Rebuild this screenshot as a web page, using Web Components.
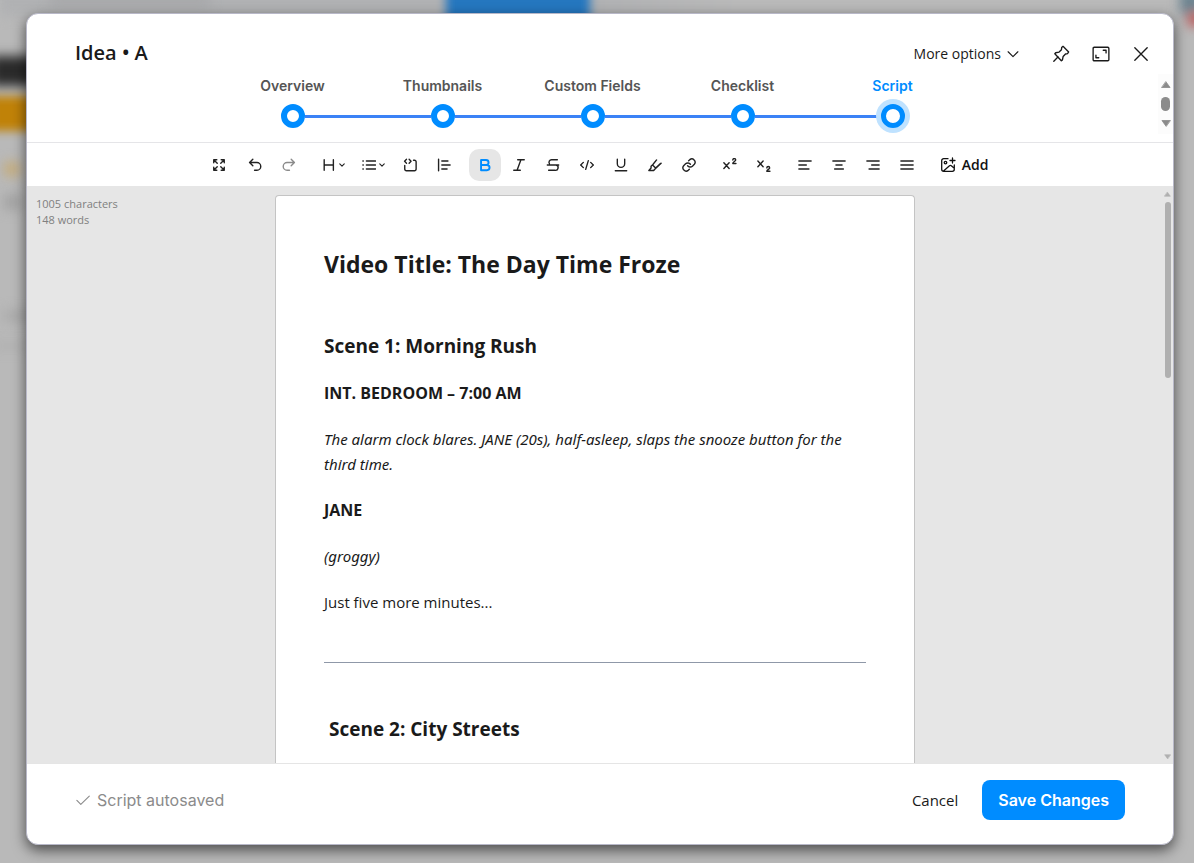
<!DOCTYPE html>
<html lang="en">
<head>
<meta charset="utf-8">
<meta name="viewport" content="width=device-width, initial-scale=1">
<title>Idea • A</title>
<style>
  html, body { height: 100%; margin: 0; }
  body { font-family: "Open Sans", "Noto Sans", sans-serif; color: #1a1a1a; background: #b9b9b9; }
</style>
</head>
<body>
<app-backdrop>
  <idea-dialog>
    <dialog-header slot="header" heading="Idea • A">
      <step-item label="Overview" first></step-item>
      <step-item label="Thumbnails"></step-item>
      <step-item label="Custom Fields"></step-item>
      <step-item label="Checklist"></step-item>
      <step-item label="Script" current last></step-item>
    </dialog-header>
    <editor-toolbar slot="toolbar"></editor-toolbar>
    <script-editor slot="editor" characters="1005" words="148">
      <h1>Video Title: The Day Time Froze</h1>
      <h2>Scene 1: Morning Rush</h2>
      <p class="cue"><strong>INT. BEDROOM – 7:00 AM</strong></p>
      <p class="direction"><em>The alarm clock blares. JANE (20s), half-asleep, slaps the snooze button for the third time.</em></p>
      <p class="cue"><strong>JANE</strong></p>
      <p class="direction"><em>(groggy)</em></p>
      <p>Just five more minutes...</p>
      <hr>
      <h2>&nbsp;Scene 2: City Streets</h2>
    </script-editor>
    <dialog-footer slot="footer">Script autosaved</dialog-footer>
  </idea-dialog>
</app-backdrop>

<script>
const define = (name, html, setup) => customElements.define(name, class extends HTMLElement {
  constructor() {
    super();
    const root = this.attachShadow({ mode: "open" });
    const t = document.createElement("template");
    t.innerHTML = html;
    root.append(t.content.cloneNode(true));
    if (setup) setup(this, root);
  }
});

/* Icon set: 16px grid, stroked with currentColor. */
const ICONS = {
  chevron: '<path d="M1.500 5 8 11.500l6.500-6.500"/>',
  caret: '<path d="M5 6.500 8 9.500l3-3"/>',
  pin: '<path d="M9.800 1.200 14.800 6.200 13.800 7.600 12 8 9.900 10.200 9.300 13.200 8.300 14 2.500 7.800 3.300 6.900 6.300 6.300 8.400 4.200 8.600 2.300Z"/><path d="M5.300 10.700 1.600 14.400"/>',
  window: '<rect x="1" y="2" width="14" height="12" rx="1"/><path d="M10 4.700h2.500V7M3.500 9v2.300H6"/>',
  close: '<path d="M2.500 2.500l11 11M13.500 2.500l-11 11"/>',
  expand: '<path d="M2 5.500V2h3.500M10.500 2H14v3.500M14 10.500V14h-3.500M5.500 14H2v-3.500M2.500 2.500l3.500 3.500M13.500 2.500 10 6M13.500 13.500 10 10M2.500 13.500 6 10"/>',
  undo: '<path d="M5.500 1.500 1.800 5.200l3.700 3.700M2 5.200h8.200a4.400 4.400 0 0 1 0 8.800H7.500"/>',
  redo: '<path d="M10.500 1.500l3.700 3.700-3.700 3.700M14 5.200H5.800a4.400 4.400 0 0 0 0 8.800H8.500"/>',
  heading: '<path d="M2.500 2v12M13 2v12M2.500 8H13"/>',
  list: '<path d="M5 3.500h10.500M5 8h10.500M5 12.500h10.500"/><path d="M1 3.500h.5M1 8h.5M1 12.500h.5"/>',
  codeblock: '<path d="M4 1.500 1.800 3.700l2.200 2.200M7 1.500l2.200 2.200L7 5.900M12 2.500h1.200A1.800 1.800 0 0 1 15 4.300v8.400a1.800 1.800 0 0 1-1.800 1.800H3.800A1.800 1.800 0 0 1 2 12.700V8.500"/>',
  quote: '<path d="M1.800 1.500v13M5.500 3.500h7M5.500 8h9.500M5.500 12.500h6"/>',
  bold: '<path stroke-width="2.200" d="M3.500 2.200h5.700a2.800 2.800 0 0 1 0 5.700H3.500ZM3.500 7.900h6.700a3 3 0 0 1 0 6H3.500Z"/>',
  italic: '<path d="M6.500 2h7.500M2 14h7.500M10.200 2 5.800 14"/>',
  strike: '<path d="M13 2H6.300a2.900 2.900 0 0 0-2.400 4.500M1.500 8h13M11.500 8a3 3 0 0 1-1.500 6H3"/>',
  code: '<path d="M3.800 5 .8 8l3 3M12.200 5l3 3-3 3M9.500 3 6.500 13"/>',
  underline: '<path d="M3.800 1.500v5a4.200 4.200 0 0 0 8.400 0v-5M1.500 14.500h13"/>',
  highlight: '<path d="M6 7 3.500 9.500v2L1 14.200h5.500l1.500-1.700 7-6.500M9.800 2.200 5.800 7.200a1 1 0 0 0 0 1.300l2.300 2.300a1 1 0 0 0 1.300 0l4.800-4.400"/>',
  link: '<path d="M6.400 8.900a3.700 3.700 0 0 0 5.500.4l2.200-2.200a3.700 3.700 0 0 0-5.200-5.200L7.600 3.100M9.600 7.100a3.700 3.700 0 0 0-5.500-.4L1.900 8.900a3.700 3.700 0 0 0 5.200 5.200l1.300-1.200"/>',
  sup: '<path d="M1 5.500 7 12M7 5.500 1 12M11.200 2.300a1.600 1.600 0 0 1 3.300 0c0 1.500-3.300 2-3.300 3.900h3.600"/>',
  sub: '<path d="M1 3.500 7 10M7 3.500 1 10M11.200 11.300a1.600 1.600 0 0 1 3.300 0c0 1.500-3.300 2-3.300 3.900h3.600"/>',
  left: '<path d="M1 3.500h14M1 8h8.500M1 12.500h11.500"/>',
  center: '<path d="M1 3.500h14M4.500 8h7M3 12.500h10"/>',
  right: '<path d="M1 3.500h14M6.500 8H15M3.500 12.500H15"/>',
  justify: '<path d="M1 3.500h14M1 8h14M1 12.500h14"/>',
  image: '<path d="M8 1.700H3.700A2 2 0 0 0 1.700 3.700v8.600a2 2 0 0 0 2 2h8.600a2 2 0 0 0 2-2V8M12.500 1v5M10 3.500h5M3.500 14l6-5.300a1.400 1.400 0 0 1 1.800 0l3 2.600"/><circle cx="5.500" cy="5.600" r="1.300"/>',
  check: '<path d="M1 8.500l4.500 4.500L15.200 3.500"/>',
  up: '<path fill="currentColor" d="M8 3l6.500 9h-13Z"/>',
  down: '<path fill="currentColor" d="M8 13 1.500 4h13Z"/>'
};

define("ui-icon", `
<style>
  :host { display: inline-flex; flex: none; width: var(--icon-size, 16px); height: var(--icon-size, 16px); }
  svg { width: 100%; height: 100%; fill: none; stroke: currentColor; stroke-width: var(--icon-stroke, 1.3); stroke-linecap: round; stroke-linejoin: round; }
</style>
<svg viewBox="0 0 16 16" aria-hidden="true"></svg>`, (el, root) => {
  root.querySelector("svg").innerHTML = ICONS[el.getAttribute("name")] || "";
});

define("app-backdrop", `
<style>
  :host { display: flex; box-sizing: border-box; position: relative; overflow: hidden; height: 100vh; padding: 13px 20px 18px 26px; background: #b9b9b9; }
  .blob { position: absolute; filter: blur(6px); }
  .bar { left: 0; right: 0; top: -12px; height: 28px; background: linear-gradient(90deg, #b0b1b3 50%, #b9b9b9 62%); }
  .search { left: 50px; top: -6px; width: 160px; height: 12px; background: #a6a7a9; }
  .cta { left: 446px; top: -12px; width: 144px; height: 40px; background: #2577bf; filter: blur(5px); }
  .head { left: -10px; top: 56px; width: 60px; height: 30px; background: #2a2a2a; }
  .tag { left: -10px; top: 96px; width: 60px; height: 35px; background: #c08208; filter: blur(5px); }
  .dot { left: 4px; top: 162px; width: 16px; height: 14px; background: #c5ab78; }
  .chip { left: 4px; top: 194px; width: 18px; height: 16px; background: #a2a2a2; }
  .row { left: 4px; top: 310px; width: 40px; height: 12px; background: #a9a9a9; }
  .row2 { left: -10px; top: 342px; height: 8px; background: #b0b0b0; }
  .avatar { right: -8px; top: -10px; width: 22px; height: 24px; background: #6a8390; }
  .avatar2 { right: -10px; top: 12px; width: 16px; height: 14px; background: #c05555; }
  ::slotted(*) { flex: 1; min-width: 0; position: relative; }
</style>
<div class="blob bar"></div><div class="blob search"></div><div class="blob cta"></div>
<div class="blob head"></div><div class="blob tag"></div><div class="blob dot"></div><div class="blob chip"></div>
<div class="blob row"></div><div class="blob row row2"></div>
<div class="blob avatar"></div><div class="blob avatar2"></div>
<slot></slot>`);

define("idea-dialog", `
<style>
  :host { display: flex; flex-direction: column; box-sizing: border-box; overflow: hidden; border: 1px solid #b8b8c8; border-radius: 12px; background: #fff; box-shadow: 0 5px 14px rgba(0,0,0,.6); }
  ::slotted([slot="editor"]) { flex: 1; min-height: 0; }
</style>
<slot name="header"></slot><slot name="toolbar"></slot><slot name="editor"></slot><slot name="footer"></slot>`);

define("dialog-header", `
<style>
  :host { display: block; padding-bottom: 8px; border-bottom: 1px solid #e5e5e8; }
  .top { display: flex; align-items: center; justify-content: space-between; box-sizing: border-box; height: 60px; padding: 20px 23px 0 48px; }
  h1 { margin: 0; font-size: 20px; line-height: 24px; font-weight: 600; padding-bottom: 2px; }
  .actions { display: flex; align-items: center; gap: 22px; }
  button { display: flex; align-items: center; justify-content: center; border: 0; padding: 0; background: none; color: inherit; font: inherit; --icon-stroke: 1.200; --icon-size: 18px; }
  .more { gap: 6px; margin-right: 11px; font-size: 14px; line-height: 20px; --icon-size: 12px; --icon-stroke: 1.500; }
  .lower { display: grid; grid-template-columns: 1fr 15px; height: 60px; }
  nav { display: flex; justify-content: center; padding-top: 2px; }
  .scroll { display: flex; flex-direction: column; align-items: center; justify-content: space-between; padding: 6px 0; background: #fcfcfc; color: #8b8b8b; --icon-size: 10px; }
  .scroll i { width: 9px; height: 14px; border-radius: 5px; background: #8b8b8b; }
</style>
<div class="top">
  <h1></h1>
  <div class="actions">
    <button class="more">More options <ui-icon name="chevron"></ui-icon></button>
    <button aria-label="Pin"><ui-icon name="pin"></ui-icon></button>
    <button aria-label="Full window"><ui-icon name="window"></ui-icon></button>
    <button aria-label="Close"><ui-icon name="close"></ui-icon></button>
  </div>
</div>
<div class="lower">
  <nav aria-label="Sections"><slot></slot></nav>
  <div class="scroll" aria-hidden="true"><ui-icon name="up"></ui-icon><i></i><ui-icon name="down"></ui-icon></div>
</div>`, (el, root) => {
  root.querySelector("h1").textContent = el.getAttribute("heading");
});

define("step-item", `
<style>
  :host { display: block; width: 150px; color: #555; }
  :host([current]) { color: #008cff; }
  a { display: block; color: inherit; text-decoration: none; text-align: center; font: 600 14px/20px Inter, sans-serif; }
  .rail { display: flex; align-items: center; height: 24px; margin-top: 8px; }
  .line { flex: 1; height: 3px; background: #3b82f6; }
  :host([first]) .line:first-child, :host([last]) .line:last-child { background: none; }
  .dot { box-sizing: border-box; width: 24px; height: 24px; border: 6px solid #008cff; border-radius: 50%; background: #fff; }
  :host([current]) .dot { border-width: 5px; box-shadow: 0 0 0 5px #bfe2ff; }
</style>
<a href="#"><span class="label"></span><span class="rail"><span class="line"></span><span class="dot"></span><span class="line"></span></span></a>`, (el, root) => {
  root.querySelector(".label").textContent = el.getAttribute("label");
});

const tool = (icon, label, extra = "") => `<button aria-label="${label}" ${extra}><ui-icon name="${icon}"></ui-icon></button>`;
const menu = (icon, label, cls) => `<button class="${cls}" aria-label="${label}"><ui-icon name="${icon}"></ui-icon><ui-icon class="caret" name="caret"></ui-icon></button>`;

define("editor-toolbar", `
<style>
  :host { display: flex; align-items: center; justify-content: center; gap: 9px; height: 43px; }
  .group { display: flex; gap: 2px; }
  .wide { gap: 4px; }
  button { display: flex; align-items: center; justify-content: center; width: 32px; height: 32px; padding: 0; border: 0; border-radius: 10px; background: none; color: #222; --icon-size: 14px; --icon-stroke: 1.600; }
  button:disabled { color: #8b8b8b; }
  .heading { width: 40px; }
  .list { width: 36px; }
  .caret { --icon-size: 12px; margin-right: -3px; --icon-stroke: 1.500; }
  .on { background: #e6e6e6; color: #008cff; }
  .add { gap: 6px; width: auto; padding: 0 9px 0 8px; font: 600 14px/20px "Open Sans", sans-serif; color: #111; --icon-size: 16px; --icon-stroke: 1.300; }
</style>
<div class="group wide">${tool("expand", "Fullscreen")}<div class="group">${tool("undo", "Undo")}${tool("redo", "Redo", "disabled")}</div></div>
<div class="group">${menu("heading", "Heading", "heading")}${menu("list", "List", "list")}${tool("codeblock", "Code block")}${tool("quote", "Quote")}</div>
<div class="group">${tool("bold", "Bold", 'class="on" aria-pressed="true"')}${tool("italic", "Italic")}${tool("strike", "Strikethrough")}${tool("code", "Code")}${tool("underline", "Underline")}${tool("highlight", "Highlight")}${tool("link", "Link")}</div>
<div class="group">${tool("sup", "Superscript")}${tool("sub", "Subscript")}</div>
<div class="group">${tool("left", "Align left")}${tool("center", "Align center")}${tool("right", "Align right")}${tool("justify", "Justify")}</div>
<div class="group"><button class="add"><ui-icon name="image"></ui-icon>Add</button></div>`);

define("script-editor", `
<style>
  :host { display: grid; grid-template-columns: 1fr minmax(0, 640px) 1fr 10px; grid-template-rows: minmax(0, 1fr); overflow: hidden; background: #e6e6e6; border-bottom: 1px solid #e5e5e5; }
  .stats { padding: 10px 0 0 9px; font-size: 11px; line-height: 16px; color: #808080; }
  .stats div { white-space: nowrap; }
  article { box-sizing: border-box; height: max-content; margin-top: 9px; padding: 48px; border: 1px solid #c4c4c4; border-bottom: 0; border-radius: 4px 4px 0 0; background: #fff; }
  ::slotted(h1) { margin: 0 0 47px; font-size: 23px; line-height: 40px; font-weight: 700; }
  ::slotted(h2) { margin: 0 0 20px; font-size: 19px; line-height: 30px; font-weight: 700; }
  ::slotted(p) { margin: 0 0 21px; font-size: 15px; line-height: 25px; }
  ::slotted(.cue) { font-size: 16px; }
  ::slotted(.direction) { font-family: "Noto Sans", sans-serif; }
  ::slotted(hr) { margin: 47px 0 51px; border: 0; border-top: 1px solid #8f98a8; }
  .scroll { grid-column: 4; display: flex; flex-direction: column; align-items: center; padding: 5px 1px 3px 0; color: #b0b0b0; --icon-size: 7px; }
  .thumb { width: 6px; height: 31%; margin: 4px 0 auto; border-radius: 3px; background: #b0b0b0; }
</style>
<div class="stats"><div class="c"></div><div class="w"></div></div>
<article><slot></slot></article>
<div class="scroll" aria-hidden="true"><ui-icon name="up"></ui-icon><div class="thumb"></div><ui-icon name="down"></ui-icon></div>`, (el, root) => {
  root.querySelector(".c").textContent = el.getAttribute("characters") + " characters";
  root.querySelector(".w").textContent = el.getAttribute("words") + " words";
});

define("dialog-footer", `
<style>
  :host { display: flex; align-items: center; justify-content: space-between; padding: 16px 48px 24px 49px; }
  .status { display: flex; align-items: center; gap: 7px; color: #8b8b8b; font: 400 16px/24px Inter, sans-serif; --icon-size: 14px; }
  .actions { display: flex; align-items: center; gap: 24px; }
  button { height: 40px; padding: 0; border: 0; background: none; color: #1a1a1a; font: 400 15px/24px "Open Sans", sans-serif; }
  .save { padding: 0 16px; border-radius: 8px; background: #008cff; color: #fff; font: 600 16px/24px Inter, sans-serif; }
</style>
<div class="status" role="status"><ui-icon name="check"></ui-icon><span><slot></slot></span></div>
<div class="actions"><button>Cancel</button><button class="save">Save Changes</button></div>`);
</script>
</body>
</html>
